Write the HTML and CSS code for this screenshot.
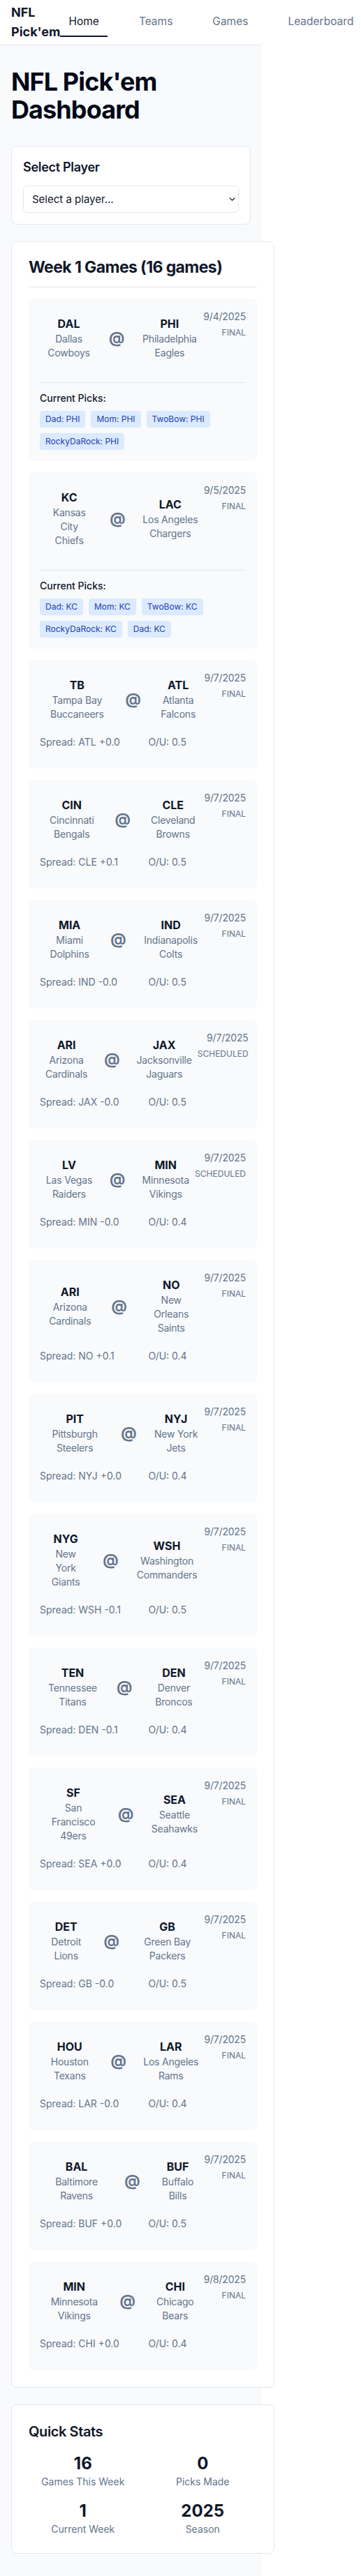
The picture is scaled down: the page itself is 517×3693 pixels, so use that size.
FILE: index.html
```html
<!DOCTYPE html>
<html lang="en">
<head>
<meta charset="utf-8">
<title>NFL Pick'em Dashboard</title>
<link rel="stylesheet" href="styles.css">
</head>
<body>
<div class="app">
  <header class="topbar">
    <div class="logo">NFL Pick'em</div>
    <nav class="nav">
      <a class="nav-link active">Home</a>
      <a class="nav-link">Teams</a>
      <a class="nav-link">Games</a>
      <a class="nav-link">Leaderboard</a>
    </nav>
  </header>
  <main class="main">
    <h1 class="page-title">NFL Pick'em Dashboard</h1>

    <section class="card player-card">
      <h2 class="label">Select Player</h2>
      <div class="select-wrap">
        <select class="select"><option>Select a player...</option></select>
        <svg class="chev" width="9" height="5" viewBox="0 0 9 5"><path d="M0.8 0.8 L4.5 4.2 L8.2 0.8" fill="none" stroke="#0f172a" stroke-width="1.2"/></svg>
      </div>
    </section>

    <section class="card wide games-card">
      <h2 class="card-title">Week 1 Games (16 games)</h2>
      <div class="games">

        <div class="game">
          <div class="game-top">
            <div class="matchup">
              <div class="team"><div class="abbr">DAL</div><div class="name">Dallas Cowboys</div></div>
              <div class="at">@</div>
              <div class="team"><div class="abbr">PHI</div><div class="name">Philadelphia Eagles</div></div>
            </div>
            <div class="when"><div class="date">9/4/2025</div><div class="status">Final</div></div>
          </div>
          <div class="picks">
            <div class="picks-title">Current Picks:</div>
            <div class="pills">
              <span class="pill">Dad: PHI</span><span class="pill">Mom: PHI</span><span class="pill">TwoBow: PHI</span><span class="pill">RockyDaRock: PHI</span>
            </div>
          </div>
        </div>

        <div class="game">
          <div class="game-top">
            <div class="matchup">
              <div class="team"><div class="abbr">KC</div><div class="name">Kansas City Chiefs</div></div>
              <div class="at">@</div>
              <div class="team"><div class="abbr">LAC</div><div class="name"><span class="city">Los Angeles</span> Chargers</div></div>
            </div>
            <div class="when"><div class="date">9/5/2025</div><div class="status">Final</div></div>
          </div>
          <div class="picks">
            <div class="picks-title">Current Picks:</div>
            <div class="pills">
              <span class="pill">Dad: KC</span><span class="pill">Mom: KC</span><span class="pill">TwoBow: KC</span><span class="pill">RockyDaRock: KC</span><span class="pill">Dad: KC</span>
            </div>
          </div>
        </div>

        <div class="game">
          <div class="game-top">
            <div class="matchup">
              <div class="team"><div class="abbr">TB</div><div class="name"><span class="city">Tampa Bay</span> Buccaneers</div></div>
              <div class="at">@</div>
              <div class="team"><div class="abbr">ATL</div><div class="name">Atlanta Falcons</div></div>
            </div>
            <div class="when"><div class="date">9/7/2025</div><div class="status">Final</div></div>
          </div>
          <div class="lines"><span>Spread: ATL +0.0</span><span>O/U: 0.5</span></div>
        </div>

        <div class="game">
          <div class="game-top">
            <div class="matchup">
              <div class="team"><div class="abbr">CIN</div><div class="name">Cincinnati Bengals</div></div>
              <div class="at">@</div>
              <div class="team"><div class="abbr">CLE</div><div class="name">Cleveland Browns</div></div>
            </div>
            <div class="when"><div class="date">9/7/2025</div><div class="status">Final</div></div>
          </div>
          <div class="lines"><span>Spread: CLE +0.1</span><span>O/U: 0.5</span></div>
        </div>

        <div class="game">
          <div class="game-top">
            <div class="matchup">
              <div class="team"><div class="abbr">MIA</div><div class="name">Miami Dolphins</div></div>
              <div class="at">@</div>
              <div class="team"><div class="abbr">IND</div><div class="name">Indianapolis Colts</div></div>
            </div>
            <div class="when"><div class="date">9/7/2025</div><div class="status">Final</div></div>
          </div>
          <div class="lines"><span>Spread: IND -0.0</span><span>O/U: 0.5</span></div>
        </div>

        <div class="game">
          <div class="game-top">
            <div class="matchup">
              <div class="team"><div class="abbr">ARI</div><div class="name">Arizona Cardinals</div></div>
              <div class="at">@</div>
              <div class="team"><div class="abbr">JAX</div><div class="name">Jacksonville Jaguars</div></div>
            </div>
            <div class="when"><div class="date">9/7/2025</div><div class="status">Scheduled</div></div>
          </div>
          <div class="lines"><span>Spread: JAX -0.0</span><span>O/U: 0.5</span></div>
        </div>

        <div class="game">
          <div class="game-top">
            <div class="matchup">
              <div class="team"><div class="abbr">LV</div><div class="name"><span class="city">Las Vegas</span> Raiders</div></div>
              <div class="at">@</div>
              <div class="team"><div class="abbr">MIN</div><div class="name">Minnesota Vikings</div></div>
            </div>
            <div class="when"><div class="date">9/7/2025</div><div class="status">Scheduled</div></div>
          </div>
          <div class="lines"><span>Spread: MIN -0.0</span><span>O/U: 0.4</span></div>
        </div>

        <div class="game">
          <div class="game-top">
            <div class="matchup">
              <div class="team"><div class="abbr">ARI</div><div class="name">Arizona Cardinals</div></div>
              <div class="at">@</div>
              <div class="team"><div class="abbr">NO</div><div class="name">New Orleans Saints</div></div>
            </div>
            <div class="when"><div class="date">9/7/2025</div><div class="status">Final</div></div>
          </div>
          <div class="lines"><span>Spread: NO +0.1</span><span>O/U: 0.4</span></div>
        </div>

        <div class="game">
          <div class="game-top">
            <div class="matchup">
              <div class="team"><div class="abbr">PIT</div><div class="name">Pittsburgh Steelers</div></div>
              <div class="at">@</div>
              <div class="team"><div class="abbr">NYJ</div><div class="name"><span class="city">New York</span> Jets</div></div>
            </div>
            <div class="when"><div class="date">9/7/2025</div><div class="status">Final</div></div>
          </div>
          <div class="lines"><span>Spread: NYJ +0.0</span><span>O/U: 0.4</span></div>
        </div>

        <div class="game">
          <div class="game-top">
            <div class="matchup">
              <div class="team"><div class="abbr">NYG</div><div class="name">New York Giants</div></div>
              <div class="at">@</div>
              <div class="team"><div class="abbr">WSH</div><div class="name">Washington Commanders</div></div>
            </div>
            <div class="when"><div class="date">9/7/2025</div><div class="status">Final</div></div>
          </div>
          <div class="lines"><span>Spread: WSH -0.1</span><span>O/U: 0.5</span></div>
        </div>

        <div class="game">
          <div class="game-top">
            <div class="matchup">
              <div class="team"><div class="abbr">TEN</div><div class="name">Tennessee Titans</div></div>
              <div class="at">@</div>
              <div class="team"><div class="abbr">DEN</div><div class="name">Denver Broncos</div></div>
            </div>
            <div class="when"><div class="date">9/7/2025</div><div class="status">Final</div></div>
          </div>
          <div class="lines"><span>Spread: DEN -0.1</span><span>O/U: 0.4</span></div>
        </div>

        <div class="game">
          <div class="game-top">
            <div class="matchup">
              <div class="team"><div class="abbr">SF</div><div class="name">San Francisco 49ers</div></div>
              <div class="at">@</div>
              <div class="team"><div class="abbr">SEA</div><div class="name">Seattle Seahawks</div></div>
            </div>
            <div class="when"><div class="date">9/7/2025</div><div class="status">Final</div></div>
          </div>
          <div class="lines"><span>Spread: SEA +0.0</span><span>O/U: 0.4</span></div>
        </div>

        <div class="game">
          <div class="game-top">
            <div class="matchup">
              <div class="team"><div class="abbr">DET</div><div class="name">Detroit Lions</div></div>
              <div class="at">@</div>
              <div class="team"><div class="abbr">GB</div><div class="name"><span class="city">Green Bay</span> Packers</div></div>
            </div>
            <div class="when"><div class="date">9/7/2025</div><div class="status">Final</div></div>
          </div>
          <div class="lines"><span>Spread: GB -0.0</span><span>O/U: 0.5</span></div>
        </div>

        <div class="game">
          <div class="game-top">
            <div class="matchup">
              <div class="team"><div class="abbr">HOU</div><div class="name">Houston Texans</div></div>
              <div class="at">@</div>
              <div class="team"><div class="abbr">LAR</div><div class="name"><span class="city">Los Angeles</span> Rams</div></div>
            </div>
            <div class="when"><div class="date">9/7/2025</div><div class="status">Final</div></div>
          </div>
          <div class="lines"><span>Spread: LAR -0.0</span><span>O/U: 0.4</span></div>
        </div>

        <div class="game">
          <div class="game-top">
            <div class="matchup">
              <div class="team"><div class="abbr">BAL</div><div class="name">Baltimore Ravens</div></div>
              <div class="at">@</div>
              <div class="team"><div class="abbr">BUF</div><div class="name">Buffalo Bills</div></div>
            </div>
            <div class="when"><div class="date">9/7/2025</div><div class="status">Final</div></div>
          </div>
          <div class="lines"><span>Spread: BUF +0.0</span><span>O/U: 0.5</span></div>
        </div>

        <div class="game">
          <div class="game-top">
            <div class="matchup">
              <div class="team"><div class="abbr">MIN</div><div class="name">Minnesota Vikings</div></div>
              <div class="at">@</div>
              <div class="team"><div class="abbr">CHI</div><div class="name">Chicago Bears</div></div>
            </div>
            <div class="when"><div class="date">9/8/2025</div><div class="status">Final</div></div>
          </div>
          <div class="lines"><span>Spread: CHI +0.0</span><span>O/U: 0.4</span></div>
        </div>

      </div>
    </section>

    <section class="card wide stats-card">
      <h2 class="stats-title">Quick Stats</h2>
      <div class="stats">
        <div class="stat"><div class="stat-num">16</div><div class="stat-label">Games This Week</div></div>
        <div class="stat"><div class="stat-num">0</div><div class="stat-label">Picks Made</div></div>
        <div class="stat"><div class="stat-num">1</div><div class="stat-label">Current Week</div></div>
        <div class="stat"><div class="stat-num">2025</div><div class="stat-label">Season</div></div>
      </div>
    </section>
  </main>
</div>
</body>
</html>
```

FILE: styles.css
```css
* { box-sizing: border-box; }
html, body { margin: 0; padding: 0; background: #ffffff; }
body {
  font-family: Inter, "Liberation Sans", sans-serif;
  color: #0f172a;
  -webkit-font-smoothing: antialiased;
}
.app {
  width: 375px;
  min-height: 100vh;
  background: #f8fafc;
}
.topbar {
  height: 65px;
  background: #ffffff;
  border-bottom: 1px solid #e2e8f0;
  display: flex;
  align-items: center;
  justify-content: space-between;
  padding: 0 16px;
}
.logo {
  font-size: 18px;
  line-height: 28px;
  font-weight: 700;
  color: #0f172a;
  flex: 0 1 auto;
}
.nav {
  display: flex;
  align-items: center;
  gap: 33px;
  flex-shrink: 0;
}
.nav-link {
  display: block;
  padding: 8px 12px;
  font-size: 15.5px;
  line-height: 24px;
  color: #64748b;
  border-bottom: 2px solid transparent;
  white-space: nowrap;
}
.nav-link.active {
  color: #0f172a;
  border-bottom-color: #0f172a;
}
.main {
  padding: 32px 16px 32px;
}
.page-title {
  margin: 0 0 32px;
  font-size: 36px;
  line-height: 40px;
  font-weight: 700;
  letter-spacing: -0.9px;
  color: #020817;
}
.card {
  background: #ffffff;
  border: 1px solid #e2e8f0;
  border-radius: 8px;
}
.wide { width: 377px; }
.player-card {
  padding: 16px;
  margin-bottom: 24px;
}
.label {
  margin: 0 0 12px;
  font-size: 18px;
  line-height: 28px;
  font-weight: 600;
  letter-spacing: -0.3px;
}
.select-wrap { position: relative; }
.select {
  display: block;
  width: 100%;
  height: 39px;
  appearance: none;
  -webkit-appearance: none;
  background: #ffffff;
  border: 1px solid #e2e8f0;
  border-radius: 6px;
  padding: 0 28px 0 12px;
  font-family: inherit;
  font-size: 15px;
  color: #0f172a;
}
.chev {
  position: absolute;
  right: 5px;
  top: 17px;
}
.games-card {
  padding: 24px;
  margin-bottom: 24px;
}
.card-title {
  margin: 0 0 16px;
  padding-bottom: 16px;
  border-bottom: 1px solid #e2e8f0;
  font-size: 23px;
  line-height: 24px;
  font-weight: 700;
  letter-spacing: -0.6px;
}
.games {
  display: flex;
  flex-direction: column;
  gap: 16px;
}
.game {
  background: #f8fafc;
  border-radius: 8px;
  padding: 16px;
}
.game-top {
  display: flex;
  justify-content: space-between;
  align-items: flex-start;
}
.matchup {
  display: flex;
  align-items: center;
  gap: 16px;
  padding: 8px 0;
}
.team {
  text-align: center;
  padding: 0 8px;
}
.abbr {
  font-size: 16px;
  line-height: 24px;
  font-weight: 700;
  color: #0f172a;
}
.name {
  font-size: 14px;
  line-height: 20px;
  letter-spacing: -0.2px;
  color: #64748b;
}
.city { white-space: nowrap; }
.at {
  font-size: 22px;
  line-height: 32px;
  font-weight: 700;
  color: #64748b;
}
.when { text-align: right; }
.date {
  font-size: 14px;
  line-height: 20px;
  letter-spacing: -0.2px;
  color: #64748b;
}
.status {
  margin-top: 5px;
  font-size: 12px;
  line-height: 16px;
  color: #64748b;
  text-transform: uppercase;
}
.lines {
  display: grid;
  grid-template-columns: 1fr 1fr;
  gap: 16px;
  margin: 12px 0 12px;
  font-size: 14px;
  line-height: 20px;
  color: #64748b;
}
.picks {
  margin-top: 24px;
  padding-top: 12px;
  border-top: 1px solid #e2e8f0;
}
.picks-title {
  font-size: 14px;
  line-height: 20px;
  font-weight: 500;
  color: #0f172a;
  margin-bottom: 8px;
}
.pills {
  display: flex;
  flex-wrap: wrap;
  gap: 8px;
}
.pill {
  display: inline-block;
  padding: 4px 8px;
  font-size: 12px;
  line-height: 16px;
  background: #dbeafe;
  color: #1e40af;
  border-radius: 4px;
}
.stats-card { padding: 24px; }
.stats-title {
  margin: 0 0 16px;
  font-size: 20px;
  line-height: 28px;
  font-weight: 600;
  letter-spacing: -0.4px;
}
.stats {
  display: grid;
  grid-template-columns: 1fr 1fr;
  gap: 16px;
  text-align: center;
}
.stat-num {
  font-size: 24px;
  line-height: 32px;
  font-weight: 700;
  color: #0f172a;
}
.stat-label {
  font-size: 14px;
  line-height: 20px;
  color: #64748b;
}
```
